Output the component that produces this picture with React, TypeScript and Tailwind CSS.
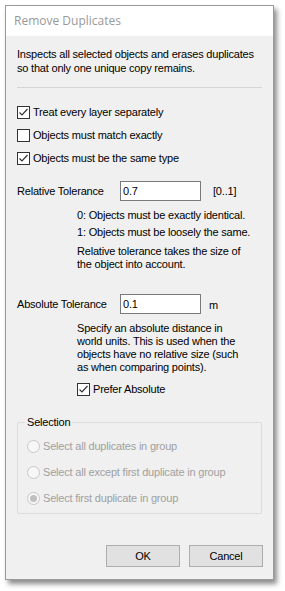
import React from 'react';

const font = { fontFamily: '"Liberation Sans", Arial, sans-serif' };

function CheckBox({ checked, label }: { checked?: boolean; label: string }) {
  return (
    <div className="flex items-center h-[13px]">
      <div className="w-[13px] h-[13px] border border-[#333] bg-white flex items-center justify-center shrink-0">
        {checked && (
          <svg width="11" height="11" viewBox="0 0 11 11">
            <path d="M1.5 5.5 L4 8 L9.5 2" fill="none" stroke="#333" strokeWidth="1.2" />
          </svg>
        )}
      </div>
      <span className="ml-[3px] text-[11px] text-black leading-[13px] whitespace-nowrap">{label}</span>
    </div>
  );
}

function Radio({ checked, label }: { checked?: boolean; label: string }) {
  return (
    <div className="flex items-center h-[13px]">
      <div className="w-[13px] h-[13px] rounded-full border border-[#c8c8c8] bg-[#f7f7f7] flex items-center justify-center shrink-0">
        {checked && <div className="w-[7px] h-[7px] rounded-full bg-[#c0c0c0]" />}
      </div>
      <span className="ml-[3px] text-[11px] text-[#a0a0a0] leading-[13px] whitespace-nowrap">{label}</span>
    </div>
  );
}

function Field({ value }: { value: string }) {
  return (
    <div className="w-[81px] h-[20px] shrink-0 border border-[#7a7a7a] bg-white px-[2px] flex items-center text-[11px] text-black">
      {value}
    </div>
  );
}

export default function App() {
  return (
    <div className="w-[285px] h-[591px] bg-white pt-[5px] pl-[5px]" style={font}>
      <div className="w-[269px] h-[575px] border border-[#9a9a9a] bg-[#f0f0f0] flex flex-col shadow-[3px_4px_5px_rgba(0,0,0,0.45)]">
        {/* title */}
        <div className="h-[30px] bg-white flex items-center pl-[8px] text-[12px] text-[#999999]" style={{ fontFamily: '"Open Sans", sans-serif' }}>
          Remove Duplicates
        </div>

        <div className="flex flex-col px-[11px] pt-[11px] text-[11px] text-black tracking-[-0.2px]">
          <p className="leading-[14px] whitespace-nowrap">
            Inspects all selected objects and erases duplicates<br />so that only one unique copy remains.
          </p>
          <div className="h-px bg-[#d5d5d5] mt-[12px] mb-[18px]" />

          <div className="flex flex-col gap-[10px]">
            <CheckBox checked label="Treat every layer separately" />
            <CheckBox label="Objects must match exactly" />
            <CheckBox checked label="Objects must be the same type" />
          </div>

          <div className="flex items-center mt-[16px]">
            <span className="w-[103px] shrink-0 whitespace-nowrap">Relative Tolerance</span>
            <Field value="0.7" />
            <span className="ml-[12px] whitespace-nowrap">[0..1]</span>
          </div>

          <div className="pl-[60px] mt-[8px] leading-[13px] flex flex-col whitespace-nowrap">
            <span>0: Objects must be exactly identical.</span>
            <span className="mt-[4px]">1: Objects must be loosely the same.</span>
            <span className="mt-[6px]">Relative tolerance takes the size of<br />the object into account.</span>
          </div>

          <div className="flex items-center mt-[23px]">
            <span className="w-[103px] shrink-0 whitespace-nowrap">Absolute Tolerance</span>
            <Field value="0.1" />
            <span className="ml-[8px] mt-[3px]">m</span>
          </div>

          <div className="pl-[60px] mt-[8px] leading-[13px] flex flex-col whitespace-nowrap">
            <span>Specify an absolute distance in<br />world units. This is used when the<br />objects have no relative size (such<br />as when comparing points).</span>
            <div className="mt-[9px]">
              <CheckBox checked label="Prefer Absolute" />
            </div>
          </div>

          <div className="relative mt-[26px] h-[92px] border border-[#dcdcdc] rounded-[2px]">
            <span className="absolute left-[7px] -top-[7px] bg-[#f0f0f0] px-[2px] leading-[13px]">Selection</span>
            <div className="flex flex-col gap-[13px] pl-[9px] pt-[17px]">
              <Radio label="Select all duplicates in group" />
              <Radio label="Select all except first duplicate in group" />
              <Radio checked label="Select first duplicate in group" />
            </div>
          </div>

          <div className="flex justify-end gap-[9px] mt-[31px] -mr-[1px]">
            <button className="w-[74px] h-[22px] bg-[#e1e1e1] border border-[#adadad] text-[11px] text-black">OK</button>
            <button className="w-[74px] h-[22px] bg-[#e1e1e1] border border-[#adadad] text-[11px] text-black">Cancel</button>
          </div>
        </div>
      </div>
    </div>
  );
}
